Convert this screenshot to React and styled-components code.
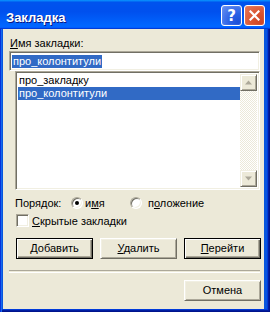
import React from "react";
import styled, { createGlobalStyle } from "styled-components";

const GlobalStyle = createGlobalStyle`
  html, body { margin: 0; padding: 0; background: #fff; }
  body { font-family: "Liberation Sans", Arial, sans-serif; font-size: 11px; color: #000; }
  #root { width: 270px; height: 312px; }
`;

const Window = styled.div`
  width: 270px;
  height: 312px;
  display: flex;
  flex-direction: column;
  overflow: hidden;
  background: #0855dd;
`;

const TitleBar = styled.div`
  height: 29px;
  flex: none;
  display: flex;
  align-items: flex-start;
  padding: 5px 5px 0 6px;
  box-sizing: border-box;
  background: linear-gradient(180deg, #0997ff, #0053ee 8%, #0050ee 40%, #0066ff 88%, #0066ff 93%, #005bff 95%, #003dd7 96%, #003dd7);
`;

const Title = styled.div`
  margin-top: 5px;
  font-family: "Liberation Sans", Arial, sans-serif;
  font-weight: bold;
  font-size: 13px;
  color: #fff;
  text-shadow: 1px 1px 0 #0a1883;
`;

const TitleButtons = styled.div`
  margin-left: auto;
  display: flex;
  gap: 2px;
`;

const CapButton = styled.div`
  width: 21px;
  height: 21px;
  box-sizing: border-box;
  border: 1px solid #fff;
  border-radius: 3px;
  display: flex;
  align-items: center;
  justify-content: center;
  color: #fff;
  font-family: "DejaVu Sans", sans-serif;
  font-weight: bold;
  font-size: 15px;
  background: ${(p) =>
    p.$red
      ? "radial-gradient(circle at 85% 85%, #cc4626 0%, #d9532f 40%, #e6795b 100%)"
      : "radial-gradient(circle at 85% 85%, #1c4fd8 0%, #2c62e6 40%, #6a93f2 100%)"};
  box-shadow: inset 0 0 1px rgba(255,255,255,0.6);
`;

const Frame = styled.div`
  flex: 1;
  display: flex;
  padding: 0 6px 3px 3px;
  box-shadow: inset 1px 0 #0831d9, inset 2px 0 #166aee, inset -1px -1px #00138c, inset -2px -2px #001ea0, inset -3px -3px #003bda, inset -4px 0 #0855dd;
`;

const Client = styled.div`
  flex: 1;
  background: #ece9d8;
  display: flex;
  flex-direction: column;
  padding: 8px 3px 0 6px;
`;

const Label = styled.div`
  line-height: 13px;
  margin-left: 1px;
  height: 13px;
`;

const sunken = `
  border: 1px solid;
  border-color: #aca899 #fff #fff #aca899;
  box-shadow: inset 1px 1px 0 #716f64, inset -1px -1px 0 #f1efe2;
  box-sizing: border-box;
  background: #fff;
`;

const Field = styled.div`
  ${sunken}
  margin-top: 1px;
  margin-right: 1px;
  height: 20px;
  padding: 3px 0 0 2px;
  line-height: 13px;
`;

const Selected = styled.span`
  background: #316ac5;
  color: #fff;
  display: inline-block;
  height: 13px;
  padding: 0 1px;
`;

const ListBox = styled.div`
  ${sunken}
  margin-left: 6px;
  margin-right: 1px;
  height: 119px;
  padding: 2px;
  display: flex;
`;

const Items = styled.div`
  flex: 1;
  padding-top: 0;
`;

const Item = styled.div`
  height: 13px;
  line-height: 13px;
  padding-left: 1px;
  background: ${(p) => (p.$selected ? "#316ac5" : "transparent")};
  color: ${(p) => (p.$selected ? "#fff" : "#000")};
`;

const ScrollBar = styled.div`
  width: 17px;
  display: flex;
  flex-direction: column;
`;

const ScrollButton = styled.div`
  width: 17px;
  height: 17px;
  box-sizing: border-box;
  background: #ece9d8;
  border: 1px solid;
  border-color: #f1efe2 #716f64 #716f64 #f1efe2;
  box-shadow: inset 1px 1px 0 #fff, inset -1px -1px 0 #aca899;
  display: flex;
  align-items: center;
  justify-content: center;
`;

const Track = styled.div`
  flex: 1;
  background: repeating-conic-gradient(#ece9d8 0 25%, #fff 0 50%) 0 0 / 2px 2px;
`;

const OrderRow = styled.div`
  margin-top: 6px;
  height: 14px;
  display: flex;
  align-items: center;
  margin-left: 6px;
`;

const OrderLabel = styled.div`
  width: 56px;
`;

const Option = styled.label`
  display: flex;
  align-items: center;
  width: ${(p) => p.$width || "auto"};
  gap: ${(p) => p.$gap || "3px"};
`;

const Radio = styled.span`
  width: 12px;
  height: 12px;
  box-sizing: border-box;
  border-radius: 50%;
  border: 1px solid;
  border-color: #aca899 #fff #fff #aca899;
  box-shadow: inset 1px 1px 0 #716f64, inset -1px -1px 0 #f1efe2;
  background: #fff;
  display: flex;
  align-items: center;
  justify-content: center;
  &::after {
    content: "";
    width: 4px;
    height: 4px;
    border-radius: 50%;
    background: ${(p) => (p.$checked ? "#000" : "transparent")};
  }
`;

const CheckRow = styled.label`
  margin-top: 3px;
  margin-left: 7px;
  height: 15px;
  display: flex;
  align-items: center;
  gap: 3px;
`;

const Checkbox = styled.span`
  ${sunken}
  width: 13px;
  height: 13px;
`;

const ButtonRow = styled.div`
  margin-top: 10px;
  margin-left: 7px;
  display: flex;
  gap: 7px;
`;

const Button = styled.div`
  width: 77px;
  height: 21px;
  box-sizing: border-box;
  background: #ece9d8;
  display: flex;
  align-items: center;
  justify-content: center;
  line-height: 13px;
  border: 1px solid;
  ${(p) =>
    p.$default
      ? `border-color: #000;
         box-shadow: inset 1px 1px 0 #fff, inset -1px -1px 0 #716f64, inset -2px -2px 0 #aca899;`
      : `border-color: #fff #716f64 #716f64 #fff;
         box-shadow: inset 1px 1px 0 #f1efe2, inset -1px -1px 0 #aca899;`}
`;

const Separator = styled.div`
  margin-top: 11px;
  margin-right: 1px;
  height: 1px;
  border-top: 1px solid #aca899;
  border-bottom: 1px solid #fff;
`;

const CancelRow = styled.div`
  margin-top: 7px;
  display: flex;
  justify-content: flex-end;
`;

const UpArrow = ({ down }) => (
  <svg width="7" height="5" viewBox="0 0 7 5" style={{ transform: down ? "rotate(180deg)" : "none" }}>
    <polygon points="3.5,0.5 7,4.5 0,4.5" fill="#aca899" />
  </svg>
);

export default function App() {
  return (
    <>
      <GlobalStyle />
      <Window>
        <TitleBar>
          <Title>Закладка</Title>
          <TitleButtons>
            <CapButton>?</CapButton>
            <CapButton $red>
              <svg width="11" height="11" viewBox="0 0 11 11">
                <path d="M1.5 1.5 L9.5 9.5 M9.5 1.5 L1.5 9.5" stroke="#fff" strokeWidth="2.2" strokeLinecap="square" />
              </svg>
            </CapButton>
          </TitleButtons>
        </TitleBar>
        <Frame>
          <Client>
            <Label><u>И</u>мя закладки:</Label>
            <Field>
              <Selected>про_колонтитули</Selected>
            </Field>
            <ListBox>
              <Items>
                <Item>про_закладку</Item>
                <Item $selected>про_колонтитули</Item>
              </Items>
              <ScrollBar>
                <ScrollButton><UpArrow /></ScrollButton>
                <Track />
                <ScrollButton><UpArrow down /></ScrollButton>
              </ScrollBar>
            </ListBox>
            <OrderRow>
              <OrderLabel>Порядок:</OrderLabel>
              <Option $width="59px" $gap="2px">
                <Radio $checked />
                <span>и<u>м</u>я</span>
              </Option>
              <Option $gap="6px">
                <Radio />
                <span>п<u>о</u>ложение</span>
              </Option>
            </OrderRow>
            <CheckRow>
              <Checkbox />
              <span><u>С</u>крытые закладки</span>
            </CheckRow>
            <ButtonRow>
              <Button $default><span><u>Д</u>обавить</span></Button>
              <Button><span><u>У</u>далить</span></Button>
              <Button $default><span><u>П</u>ерейти</span></Button>
            </ButtonRow>
            <Separator />
            <CancelRow>
              <Button>Отмена</Button>
            </CancelRow>
          </Client>
        </Frame>
      </Window>
    </>
  );
}
